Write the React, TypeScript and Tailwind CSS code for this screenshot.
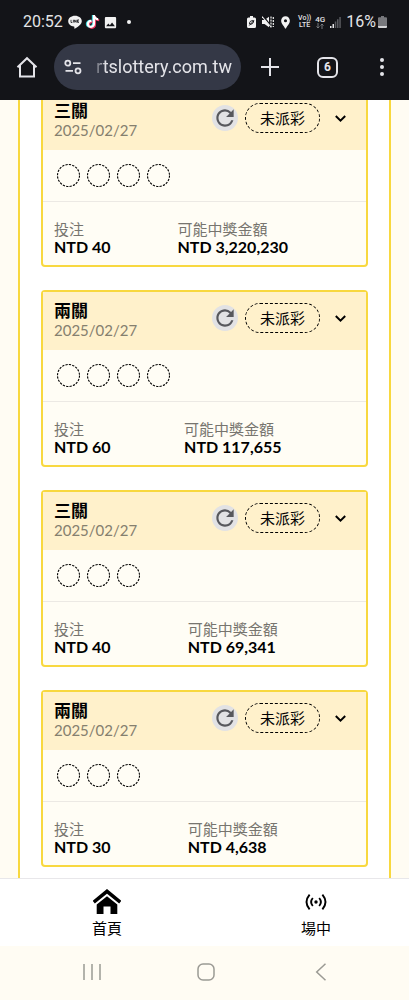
import { FaTiktok } from "react-icons/fa6";
import { MdImage, MdLocationPin, MdRefresh } from "react-icons/md";

type Bet = {
  title: string;
  date: string;
  legs: number;
  stake: string;
  prize: string;
};

const bets: Bet[] = [
  { title: "三關", date: "2025/02/27", legs: 4, stake: "NTD 40", prize: "NTD 3,220,230" },
  { title: "兩關", date: "2025/02/27", legs: 4, stake: "NTD 60", prize: "NTD 117,655" },
  { title: "三關", date: "2025/02/27", legs: 3, stake: "NTD 40", prize: "NTD 69,341" },
  { title: "兩關", date: "2025/02/27", legs: 3, stake: "NTD 30", prize: "NTD 4,638" },
];

function StatusBar() {
  return (
    <div className="flex h-11 items-center justify-between pl-[23px] pr-[22px] text-[#e4e4e6]">
      <div className="flex items-center">
        <span className="text-base leading-5">20:52</span>
        <svg className="ml-[5px] h-[14px] w-[14px]" viewBox="0 0 14 14">
          <path
            fill="#f2f2f2"
            d="M7 .8C3.2.8.2 3.2.2 6.2c0 2.7 2.4 4.9 5.7 5.3.8.2.4 1 .4 1.9 0 .3.2.4.5.2 2.1-1.1 7-3.900 7-7.400C13.800 3.200 10.800.8 7 .8z"
          />
          <path
            fill="none"
            stroke="#131418"
            strokeWidth=".8"
            d="M3 4.800v2.700h1.300M5.400 4.800v2.700M6.600 7.500V4.900l1.600 2.500V4.800M11 4.900H9.500v2.500H11M9.500 6.100h1.300"
          />
        </svg>
        <span className="relative ml-1 h-[14px] w-[13px]">
          <FaTiktok className="absolute -left-px top-0 text-[#35d6d8]" size={13} />
          <FaTiktok className="absolute left-px top-px text-[#e8375d]" size={13} />
          <FaTiktok className="absolute left-0 top-0 text-white" size={13} />
        </span>
        <MdImage className="ml-1 text-[#f2f2f2]" size={15} />
        <span className="ml-[9px] h-1 w-1 rounded-full bg-[#f2f2f2]" />
      </div>
      <div className="flex items-center">
        <svg className="h-3 w-[9px]" viewBox="0 0 9 12">
          <path fill="#f2f2f2" d="M3 0h3v1.500h1.500A1.500 1.500 0 0 1 9 3v7.500A1.500 1.500 0 0 1 7.500 12h-6A1.500 1.500 0 0 1 0 10.500V3a1.500 1.500 0 0 1 1.500-1.500H3z" />
          <path fill="none" stroke="#131418" d="M2.300 9.500 6.700 4.700C3.800 4.500 2.300 5.500 2.600 8c2.400.6 3.900-.5 4.100-3.300" />
        </svg>
        <svg className="ml-[6px] h-3 w-3" viewBox="0 0 12 12">
          <path fill="#f2f2f2" d="M0 4h2.500L7 .8v10.400L2.500 8H0z" />
          <path stroke="#131418" strokeWidth="1.500" d="M1 0l8 10" />
          <path stroke="#f2f2f2" strokeWidth="1.100" d="M0 .5 9 11" />
          <path fill="none" stroke="#f2f2f2" strokeWidth="1.200" strokeDasharray="2 1" d="M9 .5v11M11.300 1v10" />
        </svg>
        <MdLocationPin className="ml-1 text-[#f2f2f2]" size={15} />
        <span className="ml-[5px] flex flex-col items-center text-[7px] font-medium leading-[7px]">
          <span>Vo))</span>
          <span>LTE</span>
        </span>
        <span className="ml-1 flex flex-col items-center text-[8px] font-medium leading-[7px]">
          <span>4G</span>
          <svg className="h-[6px] w-2 text-[#77787c]" viewBox="0 0 8 6" fill="none" stroke="currentColor">
            <path d="M2 0v5M.5 3.500 2 5l1.500-1.500M6 6V1M4.500 2.500 6 1l1.500 1.500" />
          </svg>
        </span>
        <svg className="ml-[5px] h-[11px] w-[11px]" viewBox="0 0 11 11">
          <path fill="#e4e4e6" d="M0 9h1.500v2H0zM2.500 7H4v4H2.500z" />
          <path fill="#5a5b60" d="M4.800 4.500h1.500V11H4.800zM7 2.300h1.500V11H7zM9.300 0h1.500v11H9.300z" />
        </svg>
        <span className="ml-[5px] text-base leading-5">16%</span>
        <svg className="ml-[2px] h-3 w-[9px]" viewBox="0 0 9 12">
          <path fill="#77787c" d="M3 0h3v1.300h2q1 0 1 1V10H0V2.300q0-1 1-1h2z" />
          <path fill="#d4d4d6" d="M0 10h9v1q0 1-1 1H1q-1 0-1-1z" />
        </svg>
      </div>
    </div>
  );
}

function AddressBar() {
  return (
    <div className="flex items-center px-[15px] pb-[10px] text-[#e4e4e9]">
      <button aria-label="Home" className="shrink-0">
        <svg className="h-6 w-6" viewBox="0 0 24 24" fill="none" stroke="currentColor" strokeWidth="2">
          <path d="M2.500 12.200 12 3.200l9.500 9M5 10.200V21.500h14V10.200" />
        </svg>
      </button>
      <div className="ml-[15px] flex h-[46px] min-w-0 flex-1 items-center rounded-full bg-[#343846] pl-[10px] pr-[9px]">
        <svg className="h-4 w-[18px] shrink-0" viewBox="0 0 18 16" fill="none" stroke="currentColor" strokeWidth="1.800">
          <circle cx="3.800" cy="4.200" r="2.500" />
          <path d="M9 4.200h7.500M1.500 11.800h7.500" />
          <circle cx="14" cy="11.800" r="2.500" />
        </svg>
        <input
          aria-label="Address"
          className="ml-[6px] w-0 min-w-0 flex-1 bg-transparent text-right text-lg outline-none [mask-image:linear-gradient(to_right,transparent_4px,black_18px)]"
          defaultValue="rtslottery.com.tw"
        />
      </div>
      <button aria-label="New tab" className="ml-5 shrink-0">
        <svg className="h-[18px] w-[18px]" viewBox="0 0 18 18" stroke="currentColor" strokeWidth="2">
          <path d="M9 0v18M0 9h18" />
        </svg>
      </button>
      <button
        aria-label="Tabs"
        className="ml-[38px] flex h-[21px] w-[21px] shrink-0 items-center justify-center rounded-md border-2 border-[#e4e4e9] text-xs font-bold"
      >
        6
      </button>
      <button aria-label="Menu" className="ml-8 flex w-6 shrink-0 flex-col items-center gap-[3px]">
        <span className="h-1 w-1 rounded-full bg-current" />
        <span className="h-1 w-1 rounded-full bg-current" />
        <span className="h-1 w-1 rounded-full bg-current" />
      </button>
    </div>
  );
}

function BetCard({ bet }: { bet: Bet }) {
  return (
    <section className="rounded border-2 border-[#f8d83f] bg-[#fffdf5]">
      <div className="flex h-[58px] items-center bg-[#fff1cb] pb-[2px] pl-[11px] pr-5">
        <div className="flex-1">
          <h2 className="text-[17px] font-bold leading-5">{bet.title}</h2>
          <p className="text-[15px] leading-[18px] text-[#85806f]">{bet.date}</p>
        </div>
        <div className="flex items-center pb-1">
          <button
            aria-label="重新整理"
            className="flex h-[26px] w-[26px] items-center justify-center rounded-full bg-[#e2e2e4] text-[#57585d]"
          >
            <MdRefresh size={26} />
          </button>
          <span className="ml-[7px] flex h-[30px] w-[75px] items-center justify-center rounded-full border border-dashed border-black text-[15px]">
            未派彩
          </span>
          <button aria-label="展開" className="ml-[15px]">
            <svg className="h-[7px] w-[11px]" viewBox="0 0 11 7" fill="none" stroke="currentColor" strokeWidth="2">
              <path d="M.8 1 5.500 5.600 10.200 1" />
            </svg>
          </button>
        </div>
      </div>
      <div className="flex h-[52px] items-center gap-[6px] border-b border-[#ece9e4] pl-[13px]">
        {Array.from({ length: bet.legs }, (_, i) => (
          <svg key={i} className="h-6 w-6" viewBox="0 0 24 24" fill="none" stroke="#000">
            <circle cx="12.500" cy="11.500" r="11" strokeWidth="1.100" strokeDasharray="2.300 1.156" />
          </svg>
        ))}
      </div>
      <div className="flex justify-between px-[11px] pb-[10px] pt-[18px]">
        <div>
          <p className="text-[15px] leading-[18px] text-[#77756f]">投注</p>
          <p className="text-base font-bold leading-[17px]">{bet.stake}</p>
        </div>
        <div>
          <p className="text-[15px] leading-[18px] text-[#77756f]">可能中獎金額</p>
          <p className="text-base font-bold leading-[17px]">{bet.prize}</p>
        </div>
        <div />
      </div>
    </section>
  );
}

function BottomNav() {
  return (
    <nav className="flex h-[68px] shrink-0 justify-between border-t border-[#e8e7ea] bg-white pl-[92px] pr-[78px] pt-[10px] text-[15px]">
      <a href="#home" className="flex flex-col items-center">
        <svg className="h-[26px] w-7" viewBox="0 0 28 26">
          <path fill="none" stroke="#000" strokeWidth="3.600" d="M.7 13.200 14 2.300l13.300 10.900" />
          <path d="M14 7.200 24.300 15.500V25H17.500V17.500h-7V25H3.700V15.500z" />
        </svg>
        <span className="mt-[3px] leading-5">首頁</span>
      </a>
      <a href="#live" className="flex flex-col items-center">
        <svg className="h-[26px] w-6" viewBox="0 0 24 26" fill="none" stroke="#000" strokeWidth="1.900">
          <circle cx="12" cy="13" r="1.700" fill="#000" stroke="none" />
          <path d="M8.800 9Q5.400 13 8.800 17M15.200 9Q18.600 13 15.200 17M5.600 5.600Q-.6 13 5.600 20.400M18.400 5.600Q24.600 13 18.400 20.400" />
        </svg>
        <span className="mt-[3px] leading-5">場中</span>
      </a>
    </nav>
  );
}

function SystemNav() {
  return (
    <div className="flex h-[54px] shrink-0 items-center justify-around pb-[2px] pl-[35px] pr-[31px] text-[#9b9a94]">
      <button aria-label="Recent apps">
        <svg className="h-[18px] w-[18px]" viewBox="0 0 18 18" stroke="currentColor" strokeWidth="1.500">
          <path d="M1 1v16M9 1v16M17 1v16" />
        </svg>
      </button>
      <button aria-label="System home">
        <svg className="h-[18px] w-[18px]" viewBox="0 0 18 18" fill="none" stroke="currentColor" strokeWidth="1.500">
          <rect x="1" y="1" width="16" height="16" rx="5" />
        </svg>
      </button>
      <button aria-label="Back">
        <svg className="h-[18px] w-[18px]" viewBox="0 0 18 18" fill="none" stroke="currentColor" strokeWidth="1.500">
          <path d="M13.500.7 4.700 9l8.800 8.300" />
        </svg>
      </button>
    </div>
  );
}

function App() {
  return (
    <div className="flex h-screen flex-col bg-[#fffcf3] font-[Lato,'Noto_Sans_CJK_TC',sans-serif] text-black">
      <header className="relative z-10 shrink-0 bg-[#131418] font-[Roboto,sans-serif]">
        <StatusBar />
        <AddressBar />
      </header>
      <main className="flex-1 overflow-hidden px-[18px]">
        <div className="-mt-[10px] flex flex-col gap-[23px] border-x-2 border-[#f8d83f] bg-white px-[21px] pb-6">
          {bets.map((bet, i) => (
            <BetCard key={i} bet={bet} />
          ))}
        </div>
      </main>
      <BottomNav />
      <SystemNav />
    </div>
  );
}

export default App;
